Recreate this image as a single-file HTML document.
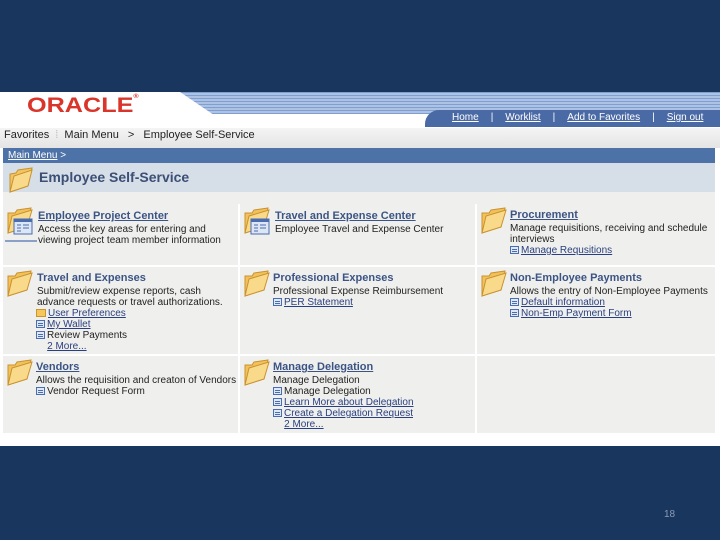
<!DOCTYPE html>
<html><head><meta charset="utf-8">
<style>
*{margin:0;padding:0;box-sizing:border-box}
body{width:720px;height:540px;background:#19375e;position:relative;overflow:hidden;font-family:"Liberation Sans",Arial,sans-serif}
.a{position:absolute}
.shot{left:0;top:92px;width:720px;height:354px;background:#fff}
.cell{position:absolute;background:#eff0ed}
.t{position:absolute;font-size:11px;font-weight:bold;color:#3c5485;text-decoration:underline;white-space:nowrap}
.d{position:absolute;font-size:10px;color:#222;line-height:11px;white-space:nowrap}
.d a{color:#2a3f80;text-decoration:underline}
.ic{display:inline-block;width:9px;height:8px;border:1px solid #4a6cb0;background:#dfe8f6;vertical-align:-1px;margin-right:2px;position:relative}
.ic:after{content:"";position:absolute;left:1px;top:2px;width:5px;height:1px;background:#4a6cb0;box-shadow:0 2px 0 #4a6cb0}
.fi{display:inline-block;width:10px;height:8px;background:#f6c75c;border:1px solid #c8962c;vertical-align:-1px;margin-right:2px}
</style></head><body>
<div class="a shot">
  <div class="a" style="left:0;top:0;width:720px;height:36px;background:#fff"></div>
  <div class="a" style="left:180px;top:0;width:540px;height:22px;background:repeating-linear-gradient(#7f9fd0 0 1px,#aec3e4 1px 3px);clip-path:polygon(0 0,100% 0,100% 100%,6% 100%)"></div>
  <div class="a" style="left:425px;top:18px;width:295px;height:17px;background:#4a6aa6;border-radius:14px 0 0 0"></div>
  <div class="a" style="left:27px;top:2px;font-size:21px;font-weight:bold;color:#d9352a;white-space:nowrap;transform:scaleX(1.2);transform-origin:left">ORACLE<span style="font-size:6px;vertical-align:top">®</span></div>
  <div class="a" style="left:452px;top:20px;font-size:10px;color:#fff;white-space:nowrap">
    <span style="text-decoration:underline">Home</span><span style="margin:0 12px">|</span><span style="text-decoration:underline">Worklist</span><span style="margin:0 12px">|</span><span style="text-decoration:underline">Add to Favorites</span><span style="margin:0 12px">|</span><span style="text-decoration:underline">Sign out</span>
  </div>
  <div class="a" style="left:0;top:36px;width:720px;height:20px;background:linear-gradient(#f4f4f4,#e4e4e4)"></div>
  <div class="a" style="left:4px;top:37px;font-size:11px;color:#222;white-space:nowrap">Favorites <span style="color:#bbb;margin:0 3px">⁞</span> Main Menu <span style="margin:0 6px">&gt;</span> Employee Self-Service</div>
  <div class="a" style="left:3px;top:56px;width:712px;height:15px;background:#4d72a8"></div>
  <div class="a" style="left:8px;top:58px;font-size:10px;color:#fff;white-space:nowrap"><span style="text-decoration:underline">Main Menu</span> &gt;</div>
  <div class="a" style="left:3px;top:71px;width:712px;height:29px;background:#d6dee8"></div>
  <div class="a" style="left:3px;top:100px;width:712px;height:12px;background:#eff0ed"></div>
  <svg class="a" style="left:8px;top:74px" width="26" height="28" viewBox="0 0 26 28"><path d="M2 8 L2 26 L20 20 L24 2 L10 4 L8 7 Z" fill="#f4c45e" stroke="#c99230"/><path d="M2 26 L6 10 L24 4 L20 20 Z" fill="#f9d98a" stroke="#c99230"/></svg>
  <div class="a" style="left:39px;top:77px;font-size:14px;font-weight:bold;color:#3c4f75">Employee Self-Service</div>
  <div class="cell" style="left:3px;top:112px;width:235px;height:61px"></div>
  <div class="cell" style="left:240px;top:112px;width:235px;height:61px"></div>
  <div class="cell" style="left:477px;top:112px;width:238px;height:61px"></div>
  <div class="cell" style="left:3px;top:175px;width:235px;height:87px"></div>
  <div class="cell" style="left:240px;top:175px;width:235px;height:87px"></div>
  <div class="cell" style="left:477px;top:175px;width:238px;height:87px"></div>
  <div class="cell" style="left:3px;top:264px;width:235px;height:77px"></div>
  <div class="cell" style="left:240px;top:264px;width:235px;height:77px"></div>
  <div class="cell" style="left:477px;top:264px;width:238px;height:77px"></div>
</div>

<svg width="0" height="0" style="position:absolute"><defs><g id="f"><path d="M1 6 L1 26 L20 20 L24 1 L10 3 L8 6 Z" fill="#f2c15a" stroke="#c99230"/><path d="M1 26 L5 9 L25 3 L20 20 Z" fill="#f9d98a" stroke="#c99230"/></g></defs></svg>
<svg class="a" style="left:7px;top:207px" width="26" height="28"><use href="#f"/><rect x="7" y="12" width="18" height="15" fill="#dce6f4" stroke="#4a6cb0"/><rect x="7" y="12" width="18" height="3" fill="#4a6cb0"/><path d="M10 18h4M10 21h4M10 24h4M16 18h6M16 21h6" stroke="#4a6cb0"/></svg>
<div class="a" style="left:5px;top:240px;width:32px;height:2px;background:#8aa0c8"></div>
<svg class="a" style="left:244px;top:207px" width="26" height="28"><use href="#f"/><rect x="7" y="12" width="18" height="15" fill="#dce6f4" stroke="#4a6cb0"/><rect x="7" y="12" width="18" height="3" fill="#4a6cb0"/><path d="M10 18h4M10 21h4M10 24h4M16 18h6M16 21h6" stroke="#4a6cb0"/></svg>
<svg class="a" style="left:481px;top:207px" width="26" height="28"><use href="#f"/></svg>
<svg class="a" style="left:7px;top:270px" width="26" height="28"><use href="#f"/></svg>
<svg class="a" style="left:244px;top:270px" width="26" height="28"><use href="#f"/></svg>
<svg class="a" style="left:481px;top:270px" width="26" height="28"><use href="#f"/></svg>
<svg class="a" style="left:7px;top:359px" width="26" height="28"><use href="#f"/></svg>
<svg class="a" style="left:244px;top:359px" width="26" height="28"><use href="#f"/></svg>

<div class="t" style="left:38px;top:210px">Employee Project Center</div>
<div class="d" style="left:38px;top:224px">Access the key areas for entering and<br>viewing project team member information</div>
<div class="t" style="left:275px;top:210px">Travel and Expense Center</div>
<div class="d" style="left:275px;top:224px">Employee Travel and Expense Center</div>
<div class="t" style="left:510px;top:209px">Procurement</div>
<div class="d" style="left:510px;top:223px">Manage requisitions, receiving and schedule<br>interviews<br><span class="ic"></span><a>Manage Requsitions</a></div>
<div class="t" style="left:37px;top:272px;text-decoration:none">Travel and Expenses</div>
<div class="d" style="left:37px;top:286px">Submit/review expense reports, cash<br>advance requests  or travel authorizations.</div>
<div class="d" style="left:36px;top:308px"><span class="fi"></span><a>User Preferences</a><br><span class="ic"></span><a>My Wallet</a><br><span class="ic"></span>Review Payments<br>&nbsp;&nbsp;&nbsp;&nbsp;<a>2 More...</a></div>
<div class="t" style="left:273px;top:272px;text-decoration:none">Professional Expenses</div>
<div class="d" style="left:273px;top:286px">Professional Expense Reimbursement<br><span class="ic"></span><a>PER Statement</a></div>
<div class="t" style="left:510px;top:272px;text-decoration:none">Non-Employee Payments</div>
<div class="d" style="left:510px;top:286px">Allows the entry of Non-Employee Payments<br><span class="ic"></span><a>Default  information</a><br><span class="ic"></span><a>Non-Emp Payment Form</a></div>
<div class="t" style="left:36px;top:361px">Vendors</div>
<div class="d" style="left:36px;top:375px">Allows the requisition and creaton of Vendors<br><span class="ic"></span>Vendor Request Form</div>
<div class="t" style="left:273px;top:361px">Manage Delegation</div>
<div class="d" style="left:273px;top:375px">Manage Delegation<br><span class="ic"></span>Manage Delegation<br><span class="ic"></span><a>Learn More about Delegation</a><br><span class="ic"></span><a>Create a Delegation Request</a><br>&nbsp;&nbsp;&nbsp;&nbsp;<a>2 More...</a></div>

<div class="a" style="left:664px;top:509px;font-size:10px;color:#8a9ab5">18</div>
</body></html>
